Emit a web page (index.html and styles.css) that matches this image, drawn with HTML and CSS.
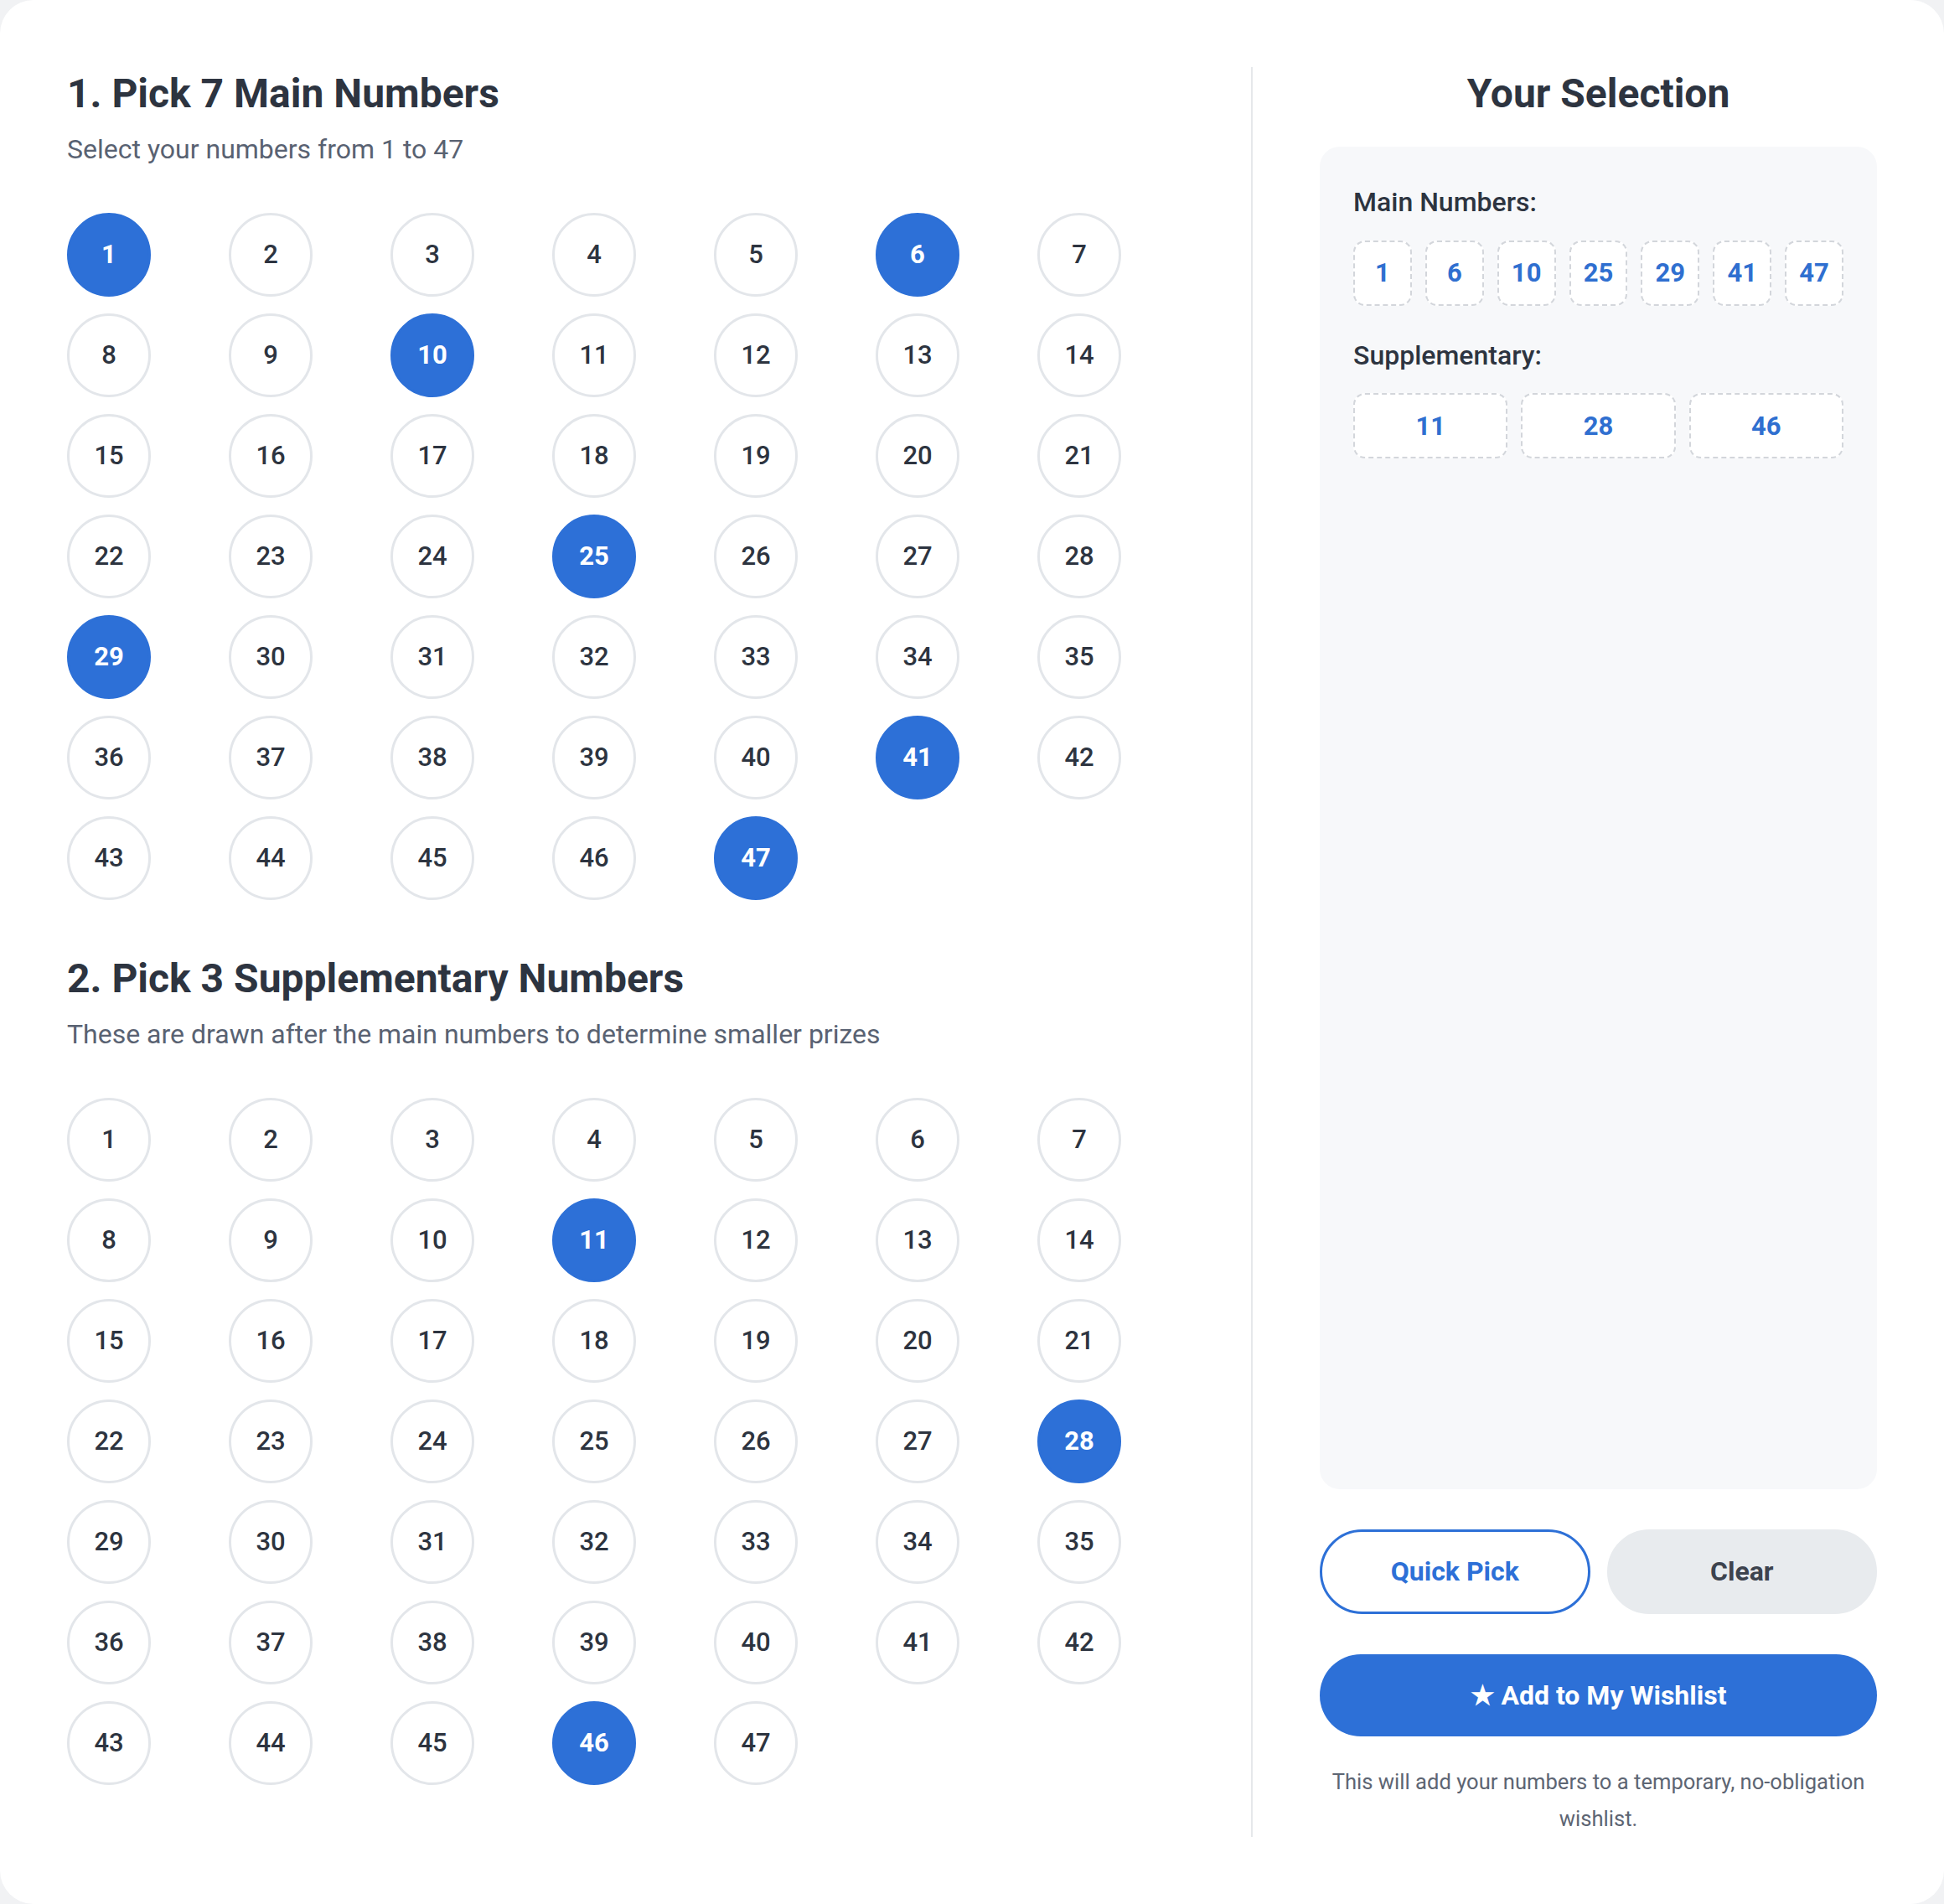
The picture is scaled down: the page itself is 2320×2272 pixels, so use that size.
FILE: index.html
```html
<!DOCTYPE html>
<html lang="en">
<head>
<meta charset="utf-8">
<title>Pick Your Numbers</title>
<link rel="stylesheet" href="styles.css">
</head>
<body>
<main class="card">
  <section class="picker">
    <div class="section">
      <h2 class="section-title">1. Pick 7 Main Numbers</h2>
      <p class="section-sub">Select your numbers from 1 to 47</p>
      <div class="ball-grid">
        <button class="ball is-selected">1</button><button class="ball">2</button><button class="ball">3</button><button class="ball">4</button><button class="ball">5</button><button class="ball is-selected">6</button><button class="ball">7</button>
        <button class="ball">8</button><button class="ball">9</button><button class="ball is-selected">10</button><button class="ball">11</button><button class="ball">12</button><button class="ball">13</button><button class="ball">14</button>
        <button class="ball">15</button><button class="ball">16</button><button class="ball">17</button><button class="ball">18</button><button class="ball">19</button><button class="ball">20</button><button class="ball">21</button>
        <button class="ball">22</button><button class="ball">23</button><button class="ball">24</button><button class="ball is-selected">25</button><button class="ball">26</button><button class="ball">27</button><button class="ball">28</button>
        <button class="ball is-selected">29</button><button class="ball">30</button><button class="ball">31</button><button class="ball">32</button><button class="ball">33</button><button class="ball">34</button><button class="ball">35</button>
        <button class="ball">36</button><button class="ball">37</button><button class="ball">38</button><button class="ball">39</button><button class="ball">40</button><button class="ball is-selected">41</button><button class="ball">42</button>
        <button class="ball">43</button><button class="ball">44</button><button class="ball">45</button><button class="ball">46</button><button class="ball is-selected">47</button>
      </div>
    </div>
    <div class="section">
      <h2 class="section-title">2. Pick 3 Supplementary Numbers</h2>
      <p class="section-sub">These are drawn after the main numbers to determine smaller prizes</p>
      <div class="ball-grid">
        <button class="ball">1</button><button class="ball">2</button><button class="ball">3</button><button class="ball">4</button><button class="ball">5</button><button class="ball">6</button><button class="ball">7</button>
        <button class="ball">8</button><button class="ball">9</button><button class="ball">10</button><button class="ball is-selected">11</button><button class="ball">12</button><button class="ball">13</button><button class="ball">14</button>
        <button class="ball">15</button><button class="ball">16</button><button class="ball">17</button><button class="ball">18</button><button class="ball">19</button><button class="ball">20</button><button class="ball">21</button>
        <button class="ball">22</button><button class="ball">23</button><button class="ball">24</button><button class="ball">25</button><button class="ball">26</button><button class="ball">27</button><button class="ball is-selected">28</button>
        <button class="ball">29</button><button class="ball">30</button><button class="ball">31</button><button class="ball">32</button><button class="ball">33</button><button class="ball">34</button><button class="ball">35</button>
        <button class="ball">36</button><button class="ball">37</button><button class="ball">38</button><button class="ball">39</button><button class="ball">40</button><button class="ball">41</button><button class="ball">42</button>
        <button class="ball">43</button><button class="ball">44</button><button class="ball">45</button><button class="ball is-selected">46</button><button class="ball">47</button>
      </div>
    </div>
  </section>

  <aside class="summary">
    <h2 class="summary-title">Your Selection</h2>
    <div class="selection-box">
      <div class="sel-group">
        <div class="sel-label">Main Numbers:</div>
        <div class="chip-row chip-row-main">
          <span class="chip">1</span><span class="chip">6</span><span class="chip">10</span><span class="chip">25</span><span class="chip">29</span><span class="chip">41</span><span class="chip">47</span>
        </div>
      </div>
      <div class="sel-group">
        <div class="sel-label">Supplementary:</div>
        <div class="chip-row chip-row-supp">
          <span class="chip">11</span><span class="chip">28</span><span class="chip">46</span>
        </div>
      </div>
    </div>
    <div class="actions">
      <button class="btn btn-outline">Quick Pick</button>
      <button class="btn btn-muted">Clear</button>
    </div>
    <button class="btn btn-primary">&#9733; Add to My Wishlist</button>
    <p class="note">This will add your numbers to a temporary, no-obligation wishlist.</p>
  </aside>
</main>
</body>
</html>
```

FILE: styles.css
```css
* { box-sizing: border-box; }

html, body {
  margin: 0;
  padding: 0;
}

body {
  background: #f1f2f4;
  font-family: Roboto, "Liberation Sans", Arial, sans-serif;
  color: #2d3440;
}

.card {
  display: flex;
  height: 2272px;
  padding: 80px;
  background: #ffffff;
  border-radius: 40px;
}

/* Left column */
.picker {
  flex: 1;
  min-width: 0;
}

.section + .section {
  margin-top: 62px;
}

.section-title {
  margin: 0 0 10px;
  font-size: 48px;
  line-height: 1.33;
  font-weight: 700;
  color: #2d3440;
}

.section-sub {
  margin: 0 0 52px;
  font-size: 32px;
  line-height: 1.5;
  font-weight: 400;
  color: #596272;
}

.ball-grid {
  display: grid;
  grid-template-columns: repeat(7, 100px);
  column-gap: 93px;
  row-gap: 20px;
}

.ball {
  width: 100px;
  height: 100px;
  padding: 0;
  border: 3px solid #e3e6ea;
  border-radius: 50%;
  background: #ffffff;
  font-family: inherit;
  font-size: 31px;
  font-weight: 500;
  color: #2d3440;
  display: flex;
  align-items: center;
  justify-content: center;
}

.ball.is-selected {
  background: #2d70d7;
  border-color: #2d70d7;
  color: #ffffff;
  font-weight: 700;
}

/* Right column */
.summary {
  width: 747px;
  flex: none;
  border-left: 2px solid #e6e8eb;
  padding-left: 80px;
  display: flex;
  flex-direction: column;
}

.summary-title {
  margin: 0 0 31px;
  font-size: 48px;
  line-height: 1.33;
  font-weight: 700;
  text-align: center;
  color: #2d3440;
}

.selection-box {
  flex: 1;
  background: #f7f8fa;
  border-radius: 24px;
  padding: 44px 40px 40px;
}

.sel-group + .sel-group {
  margin-top: 37px;
}

.sel-label {
  margin-bottom: 23px;
  font-size: 32px;
  line-height: 1.4;
  font-weight: 500;
  color: #2d3440;
}

.chip-row {
  display: grid;
  gap: 16px;
}

.chip-row-main { grid-template-columns: repeat(7, 1fr); }
.chip-row-supp { grid-template-columns: repeat(3, 1fr); }

.chip {
  height: 78px;
  display: flex;
  align-items: center;
  justify-content: center;
  background: #ffffff;
  border: 2px dashed #d3d6db;
  border-radius: 14px;
  font-size: 31px;
  font-weight: 700;
  color: #2f6fd0;
}

.actions {
  margin-top: 48px;
  display: grid;
  grid-template-columns: 1fr 1fr;
  gap: 20px;
}

.btn {
  font-family: inherit;
  font-size: 32px;
  font-weight: 700;
  border-radius: 999px;
  display: flex;
  align-items: center;
  justify-content: center;
  padding: 0;
}

.btn-outline {
  height: 101px;
  background: #ffffff;
  border: 3px solid #2d70d7;
  color: #2d70d7;
}

.btn-muted {
  height: 101px;
  background: #e8ebee;
  border: 3px solid #e8ebee;
  color: #3d434e;
}

.btn-primary {
  margin-top: 48px;
  height: 98px;
  width: 100%;
  background: #2d70d7;
  border: none;
  color: #ffffff;
}

.note {
  margin: 32px 0 0;
  font-size: 25.6px;
  line-height: 1.72;
  text-align: center;
  color: #5d6573;
}
```
